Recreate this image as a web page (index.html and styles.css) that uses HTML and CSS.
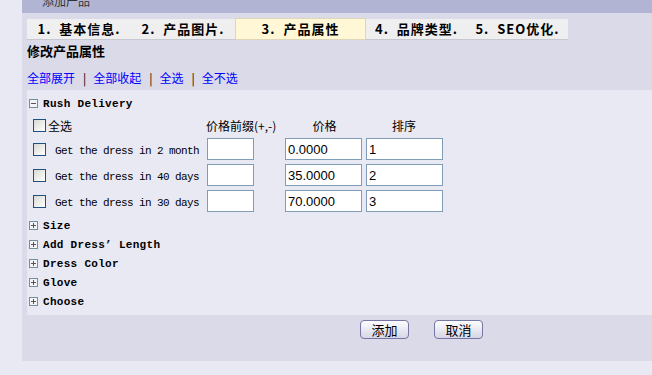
FILE: index.html
```html
<!DOCTYPE html>
<html lang="zh-CN">
  <head>
    <meta charset="UTF-8" />
    <title>添加产品</title>
    <link rel="stylesheet" href="styles.css">
  </head>
  <body>
    <div class="panel">
      <div class="page-title"><span>添加产品</span></div>

      <div class="main">
        <!-- step tabs -->
        <div class="tabs">
          <div class="tab tab-wide">1.&nbsp; 基本信息.</div>
          <div class="tab tab-wide">2.&nbsp; 产品图片.</div>
          <div class="tab active">3.&nbsp; 产品属性</div>
          <div class="tab">4.&nbsp; 品牌类型.</div>
          <div class="tab">5.&nbsp; SEO优化.</div>
        </div>

        <div class="form-title">修改产品属性</div>

        <div class="links">
          <a href="#">全部展开</a><span class="sep">|</span><a href="#">全部收起</a><span class="sep">|</span><a href="#">全选</a><span class="sep">|</span><a href="#">全不选</a>
        </div>

        <div class="attr-box">
          <div class="attr-head">
            <svg class="toggle" width="9" height="9" viewBox="0 0 9 9"><rect x="0.5" y="0.5" width="8" height="8" fill="#f4f4f8" stroke="#71909c"/><path d="M2 4.5h5" stroke="#555" /></svg>
            <span>Rush Delivery</span>
          </div>

          <div class="opt-table">
            <label class="check-all"><input type="checkbox" class="chk">全选</label>
            <div class="col-head left">价格前缀(+,-)</div>
            <div class="col-head">价格</div>
            <div class="col-head">排序</div>

            <div class="cell"><input type="checkbox" class="chk"></div>
            <div class="cell opt-name">Get the dress in 2 month</div>
            <div class="cell"><input type="text" class="txt short"></div>
            <div class="cell"><input type="text" class="txt" value="0.0000"></div>
            <div class="cell"><input type="text" class="txt" value="1"></div>

            <div class="cell"><input type="checkbox" class="chk"></div>
            <div class="cell opt-name">Get the dress in 40 days</div>
            <div class="cell"><input type="text" class="txt short"></div>
            <div class="cell"><input type="text" class="txt" value="35.0000"></div>
            <div class="cell"><input type="text" class="txt" value="2"></div>

            <div class="cell"><input type="checkbox" class="chk"></div>
            <div class="cell opt-name">Get the dress in 30 days</div>
            <div class="cell"><input type="text" class="txt short"></div>
            <div class="cell"><input type="text" class="txt" value="70.0000"></div>
            <div class="cell"><input type="text" class="txt" value="3"></div>
          </div>

          <div class="attr-head closed">
            <svg class="toggle" width="9" height="9" viewBox="0 0 9 9"><rect x="0.5" y="0.5" width="8" height="8" fill="#f4f4f8" stroke="#71909c"/><path d="M2 4.5h5M4.5 2v5" stroke="#555" /></svg>
            <span>Size</span>
          </div>
          <div class="attr-head closed">
            <svg class="toggle" width="9" height="9" viewBox="0 0 9 9"><rect x="0.5" y="0.5" width="8" height="8" fill="#f4f4f8" stroke="#71909c"/><path d="M2 4.5h5M4.5 2v5" stroke="#555" /></svg>
            <span>Add Dress’ Length</span>
          </div>
          <div class="attr-head closed">
            <svg class="toggle" width="9" height="9" viewBox="0 0 9 9"><rect x="0.5" y="0.5" width="8" height="8" fill="#f4f4f8" stroke="#71909c"/><path d="M2 4.5h5M4.5 2v5" stroke="#555" /></svg>
            <span>Dress Color</span>
          </div>
          <div class="attr-head closed">
            <svg class="toggle" width="9" height="9" viewBox="0 0 9 9"><rect x="0.5" y="0.5" width="8" height="8" fill="#f4f4f8" stroke="#71909c"/><path d="M2 4.5h5M4.5 2v5" stroke="#555" /></svg>
            <span>Glove</span>
          </div>
          <div class="attr-head closed">
            <svg class="toggle" width="9" height="9" viewBox="0 0 9 9"><rect x="0.5" y="0.5" width="8" height="8" fill="#f4f4f8" stroke="#71909c"/><path d="M2 4.5h5M4.5 2v5" stroke="#555" /></svg>
            <span>Choose</span>
          </div>
        </div>

        <div class="actions">
          <button class="btn">添加</button>
          <button class="btn">取消</button>
        </div>
      </div>
    </div>
  </body>
</html>
```

FILE: styles.css
```css
body {
  margin: 0;
  background-color: #e9e9f3;
  font-family: "Noto Sans CJK SC", sans-serif;
  font-size: 12px;
  color: #000;
}

.panel {
  margin-left: 22px;
  height: 361px;
  background-color: #dadae8;
}

.page-title {
  height: 13px;
  overflow: hidden;
  background-color: #b1b5d3;
  padding-left: 20px;
  color: #333;
  font-size: 12px;
  line-height: 12px;
}

.page-title span {
  display: block;
  margin-top: -5px;
}

.main {
  padding-left: 5px;
}

/* step tabs */
.tabs {
  display: flex;
  align-items: flex-end;
  margin-top: 5px;
  height: 22px;
}

.tab {
  box-sizing: border-box;
  width: 101px;
  height: 21px;
  background-color: #efeff0;
  border-bottom: 1px solid #c8c8d2;
  text-align: center;
  font-weight: bold;
  font-size: 13px;
  line-height: 20px;
  letter-spacing: 1px;
  white-space: nowrap;
}

.tab-wide {
  width: 104px;
}

.tab.active {
  width: 131px;
  height: 22px;
  background-color: #fff7d6;
  border: 1px solid #ddd6b8;
  line-height: 20px;
}

.form-title {
  padding-top: 2px;
  font-weight: bold;
  font-size: 13px;
  line-height: 17px;
}

.links {
  margin-top: 11px;
  height: 16px;
  line-height: 16px;
}

.links a {
  color: #0000ff;
  text-decoration: none;
}

.sep {
  margin: 0 7px 0 8px;
}

/* attribute box */
.attr-box {
  margin-top: 4px;
  background-color: #e9e9f3;
  padding: 4px 0 4px 2px;
  height: 225px;
  box-sizing: border-box;
}

.attr-head {
  display: flex;
  align-items: center;
  height: 19px;
  font-family: "Liberation Mono", monospace;
  font-weight: bold;
  font-size: 11px;
  letter-spacing: 0.3px;
}

.toggle {
  margin-right: 5px;
  flex-shrink: 0;
}

.opt-table {
  display: grid;
  grid-template-columns: 22px 151px 78px 81px 78px;
  grid-template-rows: 22px 26px 26px 26px;
  padding-left: 4px;
  margin-top: 1px;
  margin-bottom: 2px;
}

.check-all {
  grid-column: 1 / 3;
  display: flex;
  align-items: center;
  gap: 2px;
}

.col-head {
  text-align: center;
  align-self: center;
}

.col-head.left {
  text-align: left;
}

.cell {
  display: flex;
  align-items: center;
}

.opt-name {
  font-family: "Liberation Mono", monospace;
  font-size: 11px;
  letter-spacing: -0.6px;
  padding-top: 4px;
}

.chk {
  appearance: none;
  -webkit-appearance: none;
  margin: 0;
  width: 13px;
  height: 13px;
  box-sizing: border-box;
  border: 1px solid #1c5180;
  background: linear-gradient(135deg, #d9d9d2, #ffffff);
}

.txt {
  box-sizing: border-box;
  margin: 0 0 0 1px;
  width: 77px;
  height: 22px;
  border: 1px solid #7f9db9;
  background-color: #fff;
  padding: 0 2px;
  font-family: "Liberation Sans", Arial, sans-serif;
  font-size: 13px;
  color: #000;
}

.txt.short {
  width: 47px;
}

.actions {
  display: flex;
  gap: 25px;
  padding: 5px 0 0 333px;
}

.btn {
  box-sizing: border-box;
  width: 49px;
  height: 19px;
  padding: 0;
  border: 1px solid #7676a4;
  border-radius: 4px;
  background: linear-gradient(#fdfdff, #d6d6e6);
  font-family: "Noto Sans CJK SC", sans-serif;
  font-size: 13px;
  line-height: 17px;
  color: #000;
}
```
